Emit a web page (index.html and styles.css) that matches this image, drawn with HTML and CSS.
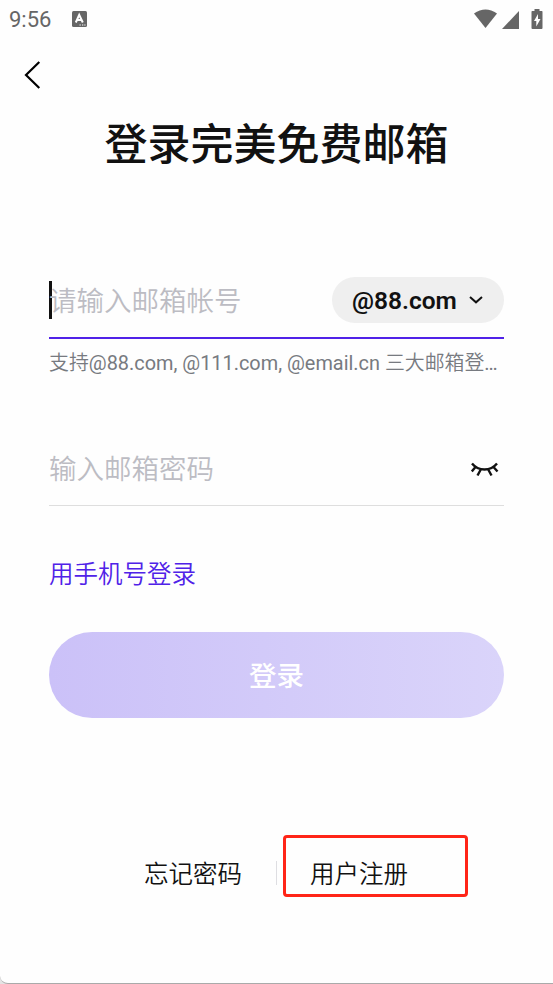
FILE: index.html
```html
<!DOCTYPE html>
<html lang="zh-CN">
<head>
    <meta charset="UTF-8">
    <meta name="viewport" content="width=device-width, initial-scale=1.0">
    <title>登录完美免费邮箱</title>
    <link rel="stylesheet" href="styles.css">
</head>
<body>
    <div class="screen">
        <!-- Status bar -->
        <div class="status-bar">
            <span class="time">9:56</span>
            <svg class="keyboard-icon" width="15" height="16" viewBox="0 0 15 16">
                <rect width="15" height="16" rx="1.5" fill="#666"/>
                <path d="M3.8 11.5L7.2 3.8L10.8 11.5M5 9H9.6" fill="none" stroke="#fff" stroke-width="2"/>
                <path d="M7.5 14h1.3M10 14h1.3M12.3 14h1.2" stroke="#fff" stroke-width="1.2"/>
            </svg>
            <svg class="system-icons" width="70" height="20" viewBox="0 0 70 20" fill="#666">
                <path d="M0 4.5Q11.5 -3.7 23 4.5L11.5 19Z"/>
                <path d="M45 2V20H28Z"/>
                <path d="M60.500 0h5v2h2.300q.7 0 .7.8V19q0 1-.9 1H58.500q-1 0-1-1V2.800q0-.8.8-.8H60.500Z"/>
                <path d="M64 5L60 12H62.300V17.500L66.500 10H64Z" fill="#fff"/>
            </svg>
        </div>

        <button class="back" type="button" aria-label="返回">
            <svg width="18" height="30" viewBox="0 0 18 30">
                <path d="M15.300 2L2 15L15.300 28" fill="none" stroke="#000" stroke-width="2.200"/>
            </svg>
        </button>

        <h1>登录完美免费邮箱</h1>

        <!-- Login form -->
        <form class="login-form">
            <div class="field account active">
                <span class="caret"></span>
                <input type="text" placeholder="请输入邮箱帐号" aria-label="邮箱帐号">
                <button class="domain" type="button">
                    <span>@88.com</span>
                    <svg width="14" height="8" viewBox="0 0 14 8">
                        <path d="M1 1L7 6.300L13 1" fill="none" stroke="#111" stroke-width="2"/>
                    </svg>
                </button>
            </div>
            <p class="hint">支持@88.com, @111.com, @email.cn 三大邮箱登…</p>

            <div class="field password">
                <input type="password" placeholder="输入邮箱密码" aria-label="邮箱密码">
                <svg class="eye" width="28" height="15" viewBox="0 0 28 15">
                    <path d="M1 1.500C7.500 9.500 19.500 9.500 26 1.500M4.500 5L.8 9.500M9.500 8L6.500 13.500M17.500 8L20.500 13.500M22.500 5L26.500 9.500" fill="none" stroke="#111" stroke-width="2.400"/>
                </svg>
            </div>

            <a class="phone-login" href="#">用手机号登录</a>
            <button class="submit" type="submit">登录</button>
        </form>

        <div class="footer">
            <a class="forgot" href="#">忘记密码</a>
            <span class="divider"></span>
            <a class="register" href="#">用户注册</a>
        </div>
    </div>
</body>
</html>
```
FILE: styles.css
```css
* {
    box-sizing: border-box;
}

body {
    margin: 0;
    background-color: #e4e4e4;
    font-family: Roboto, "Noto Sans CJK SC", sans-serif;
    color: #111;
}

.screen {
    height: 984px;
    background-color: #fefefe;
    border-bottom: 1px solid #aaa;
    border-bottom-left-radius: 8px;
    overflow: hidden;
}

button, input {
    padding: 0;
    border: none;
    background: none;
    font-family: inherit;
    color: inherit;
}

a {
    color: inherit;
    text-decoration: none;
}

.status-bar {
    display: flex;
    align-items: center;
    height: 38px;
    padding: 0 9px;
}

.time {
    width: 63px;
    font-size: 22px;
    color: #666;
}

.system-icons {
    margin-left: auto;
    margin-top: -1px;
}

.back {
    display: block;
    width: 18px;
    height: 30px;
    margin: 22px 0 0 24px;
}

.back svg {
    display: block;
}

h1 {
    margin: 23px 0 0;
    font-size: 43px;
    line-height: 64px;
    font-weight: 500;
    text-align: center;
}

.login-form {
    margin: 100px 49px 0;
}

.field {
    display: flex;
    align-items: center;
    border-bottom: 1px solid #dedede;
}

.field.active {
    height: 62px;
    padding-bottom: 14px;
    border-bottom: 2px solid #5022e8;
}

.caret {
    width: 3px;
    height: 38px;
    margin-right: -3px;
    background-color: #111;
}

input {
    flex: 1;
    min-width: 0;
    height: 42px;
    padding-top: 2px;
    font-size: 27.5px;
    font-weight: 350;
    outline: none;
}

input::placeholder {
    color: #bcbcc3;
}

.domain {
    display: flex;
    align-items: center;
    justify-content: space-between;
    width: 172px;
    height: 46px;
    padding: 0 21px 0 20px;
    border-radius: 23px;
    background-color: #efefef;
    font-size: 24.5px;
    font-weight: 600;
}

.hint {
    margin: 9px 0 0;
    font-family: Roboto, "Noto Sans CJK SC DemiLight", "Noto Sans CJK SC", sans-serif;
    font-size: 19.9px;
    line-height: 31px;
    color: #777a80;
    white-space: nowrap;
}

.password {
    height: 76px;
    margin-top: 51px;
    margin-bottom: 51px;
    padding-top: 3px;
    padding-right: 5px;
}

.password input {
    padding-top: 0;
}

.phone-login {
    display: block;
    font-size: 24.5px;
    font-weight: 350;
    line-height: 36px;
    color: #5022e8;
}

.submit {
    display: block;
    width: 100%;
    height: 86px;
    margin-top: 39px;
    padding-bottom: 3px;
    border-radius: 43px;
    background: linear-gradient(90deg, #cbc1f8, #dad4fa);
    font-size: 27.5px;
    font-weight: 500;
    color: #fff;
}

.footer {
    display: flex;
    align-items: center;
    margin: 117px 0 0 144px;
    font-size: 24.5px;
    font-weight: 350;
}

.forgot {
    width: 132px;
    padding-top: 13px;
}

.divider {
    width: 1px;
    height: 24px;
    margin-top: 14px;
    background-color: #dedee2;
}

.register {
    width: 185px;
    height: 62px;
    margin-left: 6px;
    padding-left: 24px;
    border: 3px solid #ff2517;
    border-radius: 4px;
    line-height: 74px;
}
```
